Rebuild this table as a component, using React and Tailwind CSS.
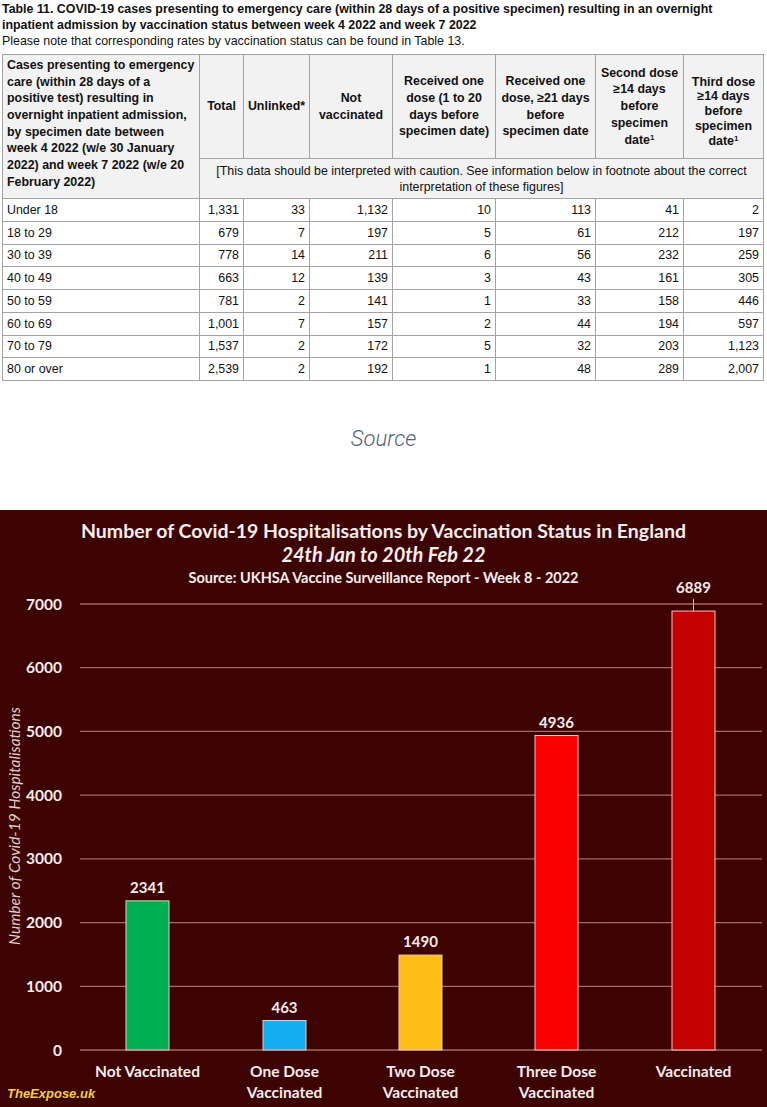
import React from "react"

const rows = [
  ["Under 18", "1,331", "33", "1,132", "10", "113", "41", "2"],
  ["18 to 29", "679", "7", "197", "5", "61", "212", "197"],
  ["30 to 39", "778", "14", "211", "6", "56", "232", "259"],
  ["40 to 49", "663", "12", "139", "3", "43", "161", "305"],
  ["50 to 59", "781", "2", "141", "1", "33", "158", "446"],
  ["60 to 69", "1,001", "7", "157", "2", "44", "194", "597"],
  ["70 to 79", "1,537", "2", "172", "5", "32", "203", "1,123"],
  ["80 or over", "2,539", "2", "192", "1", "48", "289", "2,007"],
]

const bars = [
  { label: ["Not Vaccinated"], value: 2341, x: 126, fill: "#00b050" },
  { label: ["One Dose", "Vaccinated"], value: 463, x: 263, fill: "#12aef0" },
  { label: ["Two Dose", "Vaccinated"], value: 1490, x: 399, fill: "#fdbf17" },
  { label: ["Three Dose", "Vaccinated"], value: 4936, x: 535, fill: "#fb0000" },
  { label: ["Vaccinated"], value: 6889, x: 672, fill: "#c40000" },
]

const BASE = 460
const STEP = 63.714
const yOf = (v) => BASE - (v / 1000) * STEP

function Th({ children, className = "", ...props }) {
  return (
    <th
      {...props}
      className={
        "border border-[#a3a3a3] bg-[#f2f2f2] px-[3px] text-center align-middle font-bold leading-[16.67px] whitespace-nowrap " +
        className
      }
    >
      {children}
    </th>
  )
}

function DataTable() {
  return (
    <table className="w-[761px] table-fixed border-collapse text-[12.4px] text-[#111]">
      <colgroup>
        <col className="w-[197px]" />
        <col className="w-[44px]" />
        <col className="w-[66px]" />
        <col className="w-[83px]" />
        <col className="w-[103px]" />
        <col className="w-[100px]" />
        <col className="w-[88px]" />
        <col className="w-[80px]" />
      </colgroup>
      <thead>
        <tr className="h-[104px]">
          <Th className="!text-left !align-top pt-[2px] !px-[4px]" rowSpan={2}>
            Cases presenting to emergency
            <br />
            care (within 28 days of a
            <br />
            positive test) resulting in
            <br />
            overnight inpatient admission,
            <br />
            by specimen date between
            <br />
            week 4 2022 (w/e 30 January
            <br />
            2022) and week 7 2022 (w/e 20
            <br />
            February 2022)
          </Th>
          <Th>Total</Th>
          <Th>Unlinked*</Th>
          <Th>
            Not
            <br />
            vaccinated
          </Th>
          <Th>
            Received one
            <br />
            dose (1 to 20
            <br />
            days before
            <br />
            specimen date)
          </Th>
          <Th>
            Received one
            <br />
            dose, ≥21 days
            <br />
            before
            <br />
            specimen date
          </Th>
          <Th>
            Second dose
            <br />
            ≥14 days
            <br />
            before
            <br />
            specimen
            <br />
            date<sup className="text-[8px]">1</sup>
          </Th>
          <Th className="!leading-[14.7px] pt-[10px]">
            Third dose
            <br />
            ≥14 days
            <br />
            before
            <br />
            specimen
            <br />
            date<sup className="text-[8px]">1</sup>
          </Th>
        </tr>
        <tr className="h-[40px]">
          <td
            colSpan={7}
            className="border border-[#a3a3a3] bg-[#f2f2f2] px-2 text-center leading-[16px]"
          >
            [This data should be interpreted with caution. See information below in footnote about the correct
            <br />
            interpretation of these figures]
          </td>
        </tr>
      </thead>
      <tbody>
        {rows.map((r) => (
          <tr key={r[0]} className="h-[22.75px]">
            {r.map((c, i) => (
              <td
                key={i}
                className={
                  "border border-[#a3a3a3] bg-white py-0 leading-[16px] " +
                  (i === 0 ? "pl-[4px] text-left" : "pr-[4px] text-right")
                }
              >
                {c}
              </td>
            ))}
          </tr>
        ))}
      </tbody>
    </table>
  )
}

function Chart() {
  const grid = [0, 1000, 2000, 3000, 4000, 5000, 6000, 7000]
  return (
    <svg width="767" height="518" viewBox="0 0 767 518" className="block overflow-visible">
      <text
        x="0"
        y="0"
        transform="translate(20 236) rotate(-90)"
        textAnchor="middle"
        fontFamily="Lato, sans-serif"
        fontStyle="italic"
        fontSize="15.5"
        fill="#e0cccc"
      >
        Number of Covid-19 Hospitalisations
      </text>
      {grid.map((g) => (
        <g key={g}>
          <line x1="80" x2="762" y1={yOf(g)} y2={yOf(g)} stroke="#a46a6a" strokeWidth="1.3" />
          <text
            x="62"
            y={yOf(g) + 5.5}
            textAnchor="end"
            fontFamily="Lato, sans-serif"
            fontWeight="700"
            fontSize="15.5"
            fill="#f6ecec"
          >
            {g}
          </text>
        </g>
      ))}
      {bars.map((b) => {
        const top = yOf(b.value)
        const cx = b.x + 21.5
        const isLast = b.value === 6889
        return (
          <g key={b.value}>
            <rect
              x={b.x}
              y={top}
              width="43"
              height={BASE - top}
              fill={b.fill}
              stroke="#f3c4c4"
              strokeWidth="1"
            />
            {isLast && <line x1={cx} x2={cx} y1="9" y2={top} stroke="#d9b0b0" strokeWidth="1" />}
            <text
              x={cx}
              y={isLast ? 3 : top - 8}
              textAnchor="middle"
              fontFamily="Lato, sans-serif"
              fontWeight="700"
              fontSize="15"
              fill="#f6ecec"
            >
              {b.value}
            </text>
            {b.label.map((l, i) => (
              <text
                key={l}
                x={cx}
                y={487 + i * 21}
                textAnchor="middle"
                fontFamily="Lato, sans-serif"
                fontWeight="700"
                fontSize="15.5"
                fill="#f6ecec"
              >
                {l}
              </text>
            ))}
          </g>
        )
      })}
      <text
        x="7"
        y="508"
        fontFamily="'Liberation Sans', Arial, sans-serif"
        fontWeight="700"
        fontStyle="italic"
        fontSize="13"
        fill="#f3cb4a"
      >
        TheExpose.uk
      </text>
    </svg>
  )
}

export default function App() {
  return (
    <div className="w-[767px] bg-white font-['Liberation_Sans',Arial,sans-serif]">
      <div className="px-[2px] pt-[2px]">
        <p className="text-[12.4px] leading-[15.5px] font-bold text-[#111] whitespace-nowrap">
          Table 11. COVID-19 cases presenting to emergency care (within 28 days of a positive specimen) resulting in an overnight
          <br />
          inpatient admission by vaccination status between week 4 2022 and week 7 2022
        </p>
        <p className="text-[12.4px] leading-[16px] text-[#111]">
          Please note that corresponding rates by vaccination status can be found in Table 13.
        </p>
        <div className="mt-[5px]">
          <DataTable />
        </div>
      </div>

      <p className="mt-[45px] mb-[58px] text-center font-['Roboto',sans-serif] text-[22px] leading-[26px] font-light italic text-[#4f6475]">
        Source
      </p>

      <div className="h-[598px] bg-[#3d0303] font-['Lato',sans-serif] text-[#f7eeee]">
        <div className="pt-[9px] text-center">
          <h1 className="text-[19.5px] leading-[24px] font-bold">
            Number of Covid-19 Hospitalisations by Vaccination Status in England
          </h1>
          <h2 className="text-[20px] leading-[23px] font-bold italic">24th Jan to 20th Feb 22</h2>
          <p className="text-[14.5px] leading-[24px] font-bold">
            Source: UKHSA Vaccine Surveillance Report - Week 8 - 2022
          </p>
        </div>
        <Chart />
      </div>
    </div>
  )
}
